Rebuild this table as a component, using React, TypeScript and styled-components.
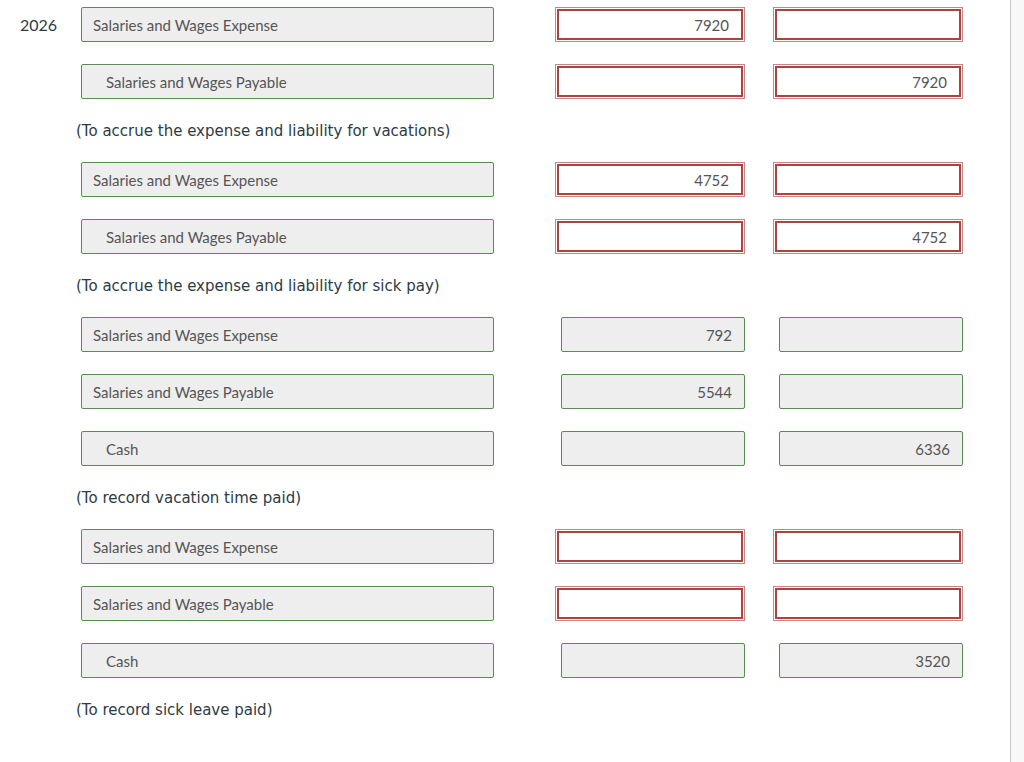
import React from "react";
import styled, { createGlobalStyle } from "styled-components";

type Tone = "ok" | "bad";

interface Line {
  account: string;
  credit?: boolean;
  debit?: string;
  creditAmt?: string;
  tone: Tone;
}

interface Entry {
  lines: Line[];
  note: string;
}

const GlobalStyle = createGlobalStyle`
  html, body {
    margin: 0;
    padding: 0;
    background: #fff;
  }
  body {
    font-family: Lato, "Open Sans", sans-serif;
    color: #2d3b45;
  }
`;

const Screen = styled.div`
  display: flex;
  width: 1024px;
  height: 762px;
  overflow: hidden;
`;

const Main = styled.div`
  flex: 1;
  padding-top: 7px;
`;

const Track = styled.div`
  width: 13px;
  border-left: 1px solid #c8c8c8;
  background: #f8f8f8;
`;

const Row = styled.div`
  display: flex;
  align-items: center;
  height: 35px;
  margin-bottom: 22px;
`;

const Year = styled.div`
  width: 61px;
  padding-left: 20px;
  font-size: 16px;
  color: #2d3b45;
`;

const Account = styled.div<{ $indent?: boolean }>`
  box-sizing: border-box;
  width: 413px;
  height: 35px;
  display: flex;
  align-items: center;
  padding-left: ${(p) => (p.$indent ? "24px" : "11px")};
  background: #eeeeee;
  border: 1px solid #5a8b52;
  border-radius: 2px;
  font-size: 15px;
  color: #555;
`;

const Amounts = styled.div`
  display: flex;
  margin-left: 61px;
  gap: 28px;
`;

const Slot = styled.div`
  width: 190px;
  display: flex;
  justify-content: flex-end;
`;

const Amount = styled.div<{ $tone: Tone }>`
  box-sizing: border-box;
  height: 35px;
  display: flex;
  align-items: center;
  justify-content: flex-end;
  font-size: 15px;
  color: #555;
  ${(p) =>
    p.$tone === "bad"
      ? `
    width: 186px;
    margin-right: 2px;
    height: 31px;
    background: #fff;
    border: 2px solid #a94442;
    box-shadow: 0 0 0 1px #fff, 0 0 0 2px #c98484;
    padding-right: 12px;
  `
      : `
    width: 184px;
    background: #eeeeee;
    border: 1px solid #5a8b52;
    border-radius: 2px;
    padding-right: 12px;
  `}
`;

const Note = styled.div`
  padding-left: 76px;
  margin-bottom: 21px;
  line-height: 20px;
  font-family: "DejaVu Sans", Verdana, sans-serif;
  font-size: 15px;
  color: #2d3b45;
`;

const entries: Entry[] = [
  {
    lines: [
      { account: "Salaries and Wages Expense", debit: "7920", tone: "bad" },
      { account: "Salaries and Wages Payable", credit: true, creditAmt: "7920", tone: "bad" },
    ],
    note: "(To accrue the expense and liability for vacations)",
  },
  {
    lines: [
      { account: "Salaries and Wages Expense", debit: "4752", tone: "bad" },
      { account: "Salaries and Wages Payable", credit: true, creditAmt: "4752", tone: "bad" },
    ],
    note: "(To accrue the expense and liability for sick pay)",
  },
  {
    lines: [
      { account: "Salaries and Wages Expense", debit: "792", tone: "ok" },
      { account: "Salaries and Wages Payable", debit: "5544", tone: "ok" },
      { account: "Cash", credit: true, creditAmt: "6336", tone: "ok" },
    ],
    note: "(To record vacation time paid)",
  },
  {
    lines: [
      { account: "Salaries and Wages Expense", tone: "bad" },
      { account: "Salaries and Wages Payable", tone: "bad" },
      { account: "Cash", credit: true, creditAmt: "3520", tone: "ok" },
    ],
    note: "(To record sick leave paid)",
  },
];

export default function App() {
  return (
    <Screen>
      <GlobalStyle />
      <Main>
        {entries.map((entry, i) => (
          <div key={i}>
            {entry.lines.map((line, j) => (
              <Row key={j}>
                <Year>{i === 0 && j === 0 ? "2026" : ""}</Year>
                <Account $indent={line.credit}>{line.account}</Account>
                <Amounts>
                  <Slot>
                    <Amount $tone={line.tone}>{line.debit}</Amount>
                  </Slot>
                  <Slot>
                    <Amount $tone={line.tone}>{line.creditAmt}</Amount>
                  </Slot>
                </Amounts>
              </Row>
            ))}
            <Note>{entry.note}</Note>
          </div>
        ))}
      </Main>
      <Track />
    </Screen>
  );
}
